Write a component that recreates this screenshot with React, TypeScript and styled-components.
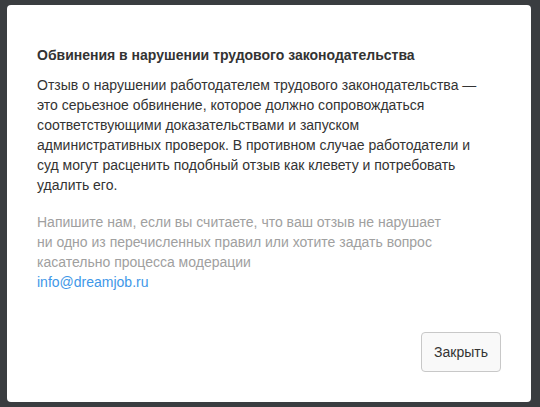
import * as React from 'react';
import styled, { createGlobalStyle } from 'styled-components';

const GlobalStyle = createGlobalStyle`
  html, body {
    margin: 0;
    padding: 0;
    background: #3a3d40;
    font-family: "Liberation Sans", Arial, sans-serif;
  }
`

const Overlay = styled.div`
  box-sizing: border-box;
  height: 407px;
  padding: 5px 9px 5px 7px;
  background: #3a3d40;
  display: flex;
`

const Modal = styled.div`
  flex: 1;
  display: flex;
  flex-direction: column;
  background: #fff;
  border-radius: 4px;
  padding: 40px 30px 30px 30px;
`

const Title = styled.h3`
  margin: 0;
  font-size: 14px;
  line-height: 20px;
  font-weight: bold;
  color: #333;
`

const Text = styled.p<{ muted?: boolean }>`
  margin: ${p => (p.muted ? '17px 0 0' : '10px 0 0')};
  font-size: 14px;
  line-height: 20px;
  color: ${p => (p.muted ? '#a0a0a0' : '#333')};
`

const Mail = styled.a`
  color: #3e97e8;
  text-decoration: none;
`

const Footer = styled.div`
  margin-top: auto;
  display: flex;
  justify-content: flex-end;
`

const Button = styled.button`
  height: 40px;
  padding: 0 12px;
  font-family: inherit;
  font-size: 14px;
  color: #333;
  background: #f9f9f9;
  border: 1px solid #c8c8c8;
  border-radius: 4px;
  cursor: pointer;
`

export default function App() {
  return (
    <>
      <GlobalStyle />
      <Overlay>
        <Modal>
          <Title>Обвинения в нарушении трудового законодательства</Title>
          <Text>
            Отзыв о нарушении работодателем трудового законодательства —<br />
            это серьезное обвинение, которое должно сопровождаться<br />
            соответствующими доказательствами и запуском<br />
            административных проверок. В противном случае работодатели и<br />
            суд могут расценить подобный отзыв как клевету и потребовать<br />
            удалить его.
          </Text>
          <Text muted>
            Напишите нам, если вы считаете, что ваш отзыв не нарушает<br />
            ни одно из перечисленных правил или хотите задать вопрос<br />
            касательно процесса модерации<br />
            <Mail href="mailto:info@dreamjob.ru">info@dreamjob.ru</Mail>
          </Text>
          <Footer>
            <Button>Закрыть</Button>
          </Footer>
        </Modal>
      </Overlay>
    </>
  )
}
